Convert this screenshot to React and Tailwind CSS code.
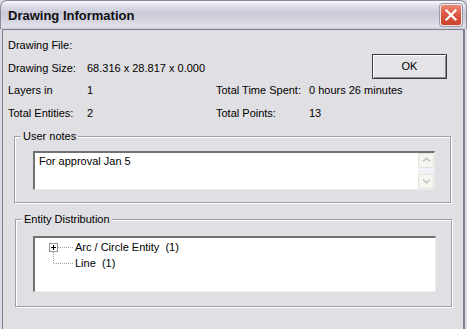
export default function App() {
  return (
    <div className="w-[467px] h-[329px] overflow-hidden flex flex-col bg-[#dcdce4] font-['Liberation_Sans',Arial,sans-serif] text-[11px] leading-[13px] text-black">
      {/* Title bar */}
      <div className="h-[29px] shrink-0 flex items-center justify-between pl-[7px] pr-[4px] rounded-t-[7px] border border-b-0 border-[#8a8a9e] bg-[linear-gradient(to_bottom,#fafafc_0%,#e4e4ec_14%,#c9c8d9_42%,#d2d2de_68%,#e2e2ea_90%,#cdcdd9_100%)]">
        <span className="pt-[2px] text-[13px] font-bold leading-[16px] text-[#101010]">Drawing Information</span>
        <div className="w-[22px] h-[22px] rounded-[3px] border border-[#f4e8e6] bg-[linear-gradient(to_bottom,#ec8a78_0%,#db5a44_45%,#c9432c_100%)] shadow-[0_0_0_1px_#9b9bab] flex items-center justify-center">
          <svg width="14" height="14" viewBox="0 0 14 14">
            <path d="M2.5 2.5 L11.5 11.5 M11.5 2.5 L2.5 11.5" stroke="#ffffff" strokeWidth="2.2" strokeLinecap="square" />
          </svg>
        </div>
      </div>

      {/* Body frame */}
      <div className="flex-1 flex px-[2px]">
        <div className="flex-1 bg-[#e0dfe3] border-l border-r-2 border-t border-[#7e7e92] pt-[4.5px]">
          {/* info grid */}
          <div className="grid grid-cols-[79px_129px_93px_1fr] grid-rows-[repeat(4,22.6px)] items-center pl-[5px]">
            <div className="col-start-1 row-start-1">Drawing File:</div>
            <div className="col-start-1 row-start-2">Drawing Size:</div>
            <div className="col-start-2 col-span-2 row-start-2">68.316 x 28.817 x 0.000</div>
            <button className="col-start-4 row-start-1 row-span-2 self-end justify-self-end mr-[16px] mb-[1px] w-[75px] h-[25px] border border-[#3c3c3c] bg-[#e4e3e7] shadow-[inset_1px_1px_0_#ffffff,inset_-1px_-1px_0_#8a8a8a] text-[11px] leading-[13px]">
              OK
            </button>
            <div className="col-start-1 row-start-3">Layers in</div>
            <div className="col-start-2 row-start-3">1</div>
            <div className="col-start-3 row-start-3">Total Time Spent:</div>
            <div className="col-start-4 row-start-3">0 hours 26 minutes</div>
            <div className="col-start-1 row-start-4">Total Entities:</div>
            <div className="col-start-2 row-start-4">2</div>
            <div className="col-start-3 row-start-4">Total Points:</div>
            <div className="col-start-4 row-start-4">13</div>
          </div>

          {/* User notes group */}
          <div className="mt-[11px] ml-[11px] w-[437px] border border-[#a0a0a0] shadow-[inset_1px_1px_0_#ffffff,1px_1px_0_#ffffff] pb-[12px]">
            <div className="-mt-[7px] ml-[6px] px-[2px] w-fit bg-[#e0dfe3] leading-[13px]">User notes</div>
            <div className="mt-[8px] ml-[18px] w-[402px] h-[39px] flex bg-white border-t-2 border-l-2 border-b border-r border-t-[#727272] border-l-[#727272] border-b-[#ededed] border-r-[#ededed]">
              <div className="flex-1 pl-[4px] pt-[2.5px]">For approval Jan 5</div>
              <div className="w-[16px] flex flex-col bg-[#f1f1f7]">
                <div className="h-[15px] rounded-[2px] border border-[#e2e2da] bg-[#f6f6f1] flex items-center justify-center">
                  <svg width="9" height="6" viewBox="0 0 9 6">
                    <path d="M1 4.5 L4.5 1.2 L8 4.5" fill="none" stroke="#c6c6be" strokeWidth="1.6" />
                  </svg>
                </div>
                <div className="flex-1" />
                <div className="h-[15px] rounded-[2px] border border-[#e2e2da] bg-[#f6f6f1] flex items-center justify-center">
                  <svg width="9" height="6" viewBox="0 0 9 6">
                    <path d="M1 1.5 L4.5 4.8 L8 1.5" fill="none" stroke="#c6c6be" strokeWidth="1.6" />
                  </svg>
                </div>
              </div>
            </div>
          </div>

          {/* Entity Distribution group */}
          <div className="mt-[16px] ml-[12px] w-[437px] border border-[#a0a0a0] shadow-[inset_1px_1px_0_#ffffff,1px_1px_0_#ffffff] pb-[14px]">
            <div className="-mt-[7px] ml-[6px] px-[2px] w-fit bg-[#e0dfe3] leading-[13px]">Entity Distribution</div>
            <div className="mt-[10px] ml-[17px] w-[403px] h-[56px] bg-white border-t-2 border-l-2 border-b border-r border-t-[#727272] border-l-[#727272] border-b-[#ededed] border-r-[#ededed] pt-[1px] pl-[13px] flex">
              <svg width="27" height="32" viewBox="0 0 27 32" className="shrink-0">
                <line x1="10" y1="8.5" x2="26" y2="8.5" stroke="#a0a0a0" strokeDasharray="1 1" />
                <line x1="5.5" y1="13" x2="5.5" y2="24" stroke="#a0a0a0" strokeDasharray="1 1" />
                <line x1="6" y1="24.5" x2="26" y2="24.5" stroke="#a0a0a0" strokeDasharray="1 1" />
                <rect x="1.5" y="4.5" width="8" height="8" fill="#ffffff" stroke="#949494" />
                <line x1="3" y1="8.5" x2="8" y2="8.5" stroke="#000000" />
                <line x1="5.5" y1="6" x2="5.5" y2="11" stroke="#000000" />
              </svg>
              <div className="flex flex-col">
                <div className="h-[16px] leading-[16px] whitespace-pre">Arc / Circle Entity  (1)</div>
                <div className="h-[16px] leading-[16px] whitespace-pre">Line  (1)</div>
              </div>
            </div>
          </div>
        </div>
      </div>
    </div>
  );
}
